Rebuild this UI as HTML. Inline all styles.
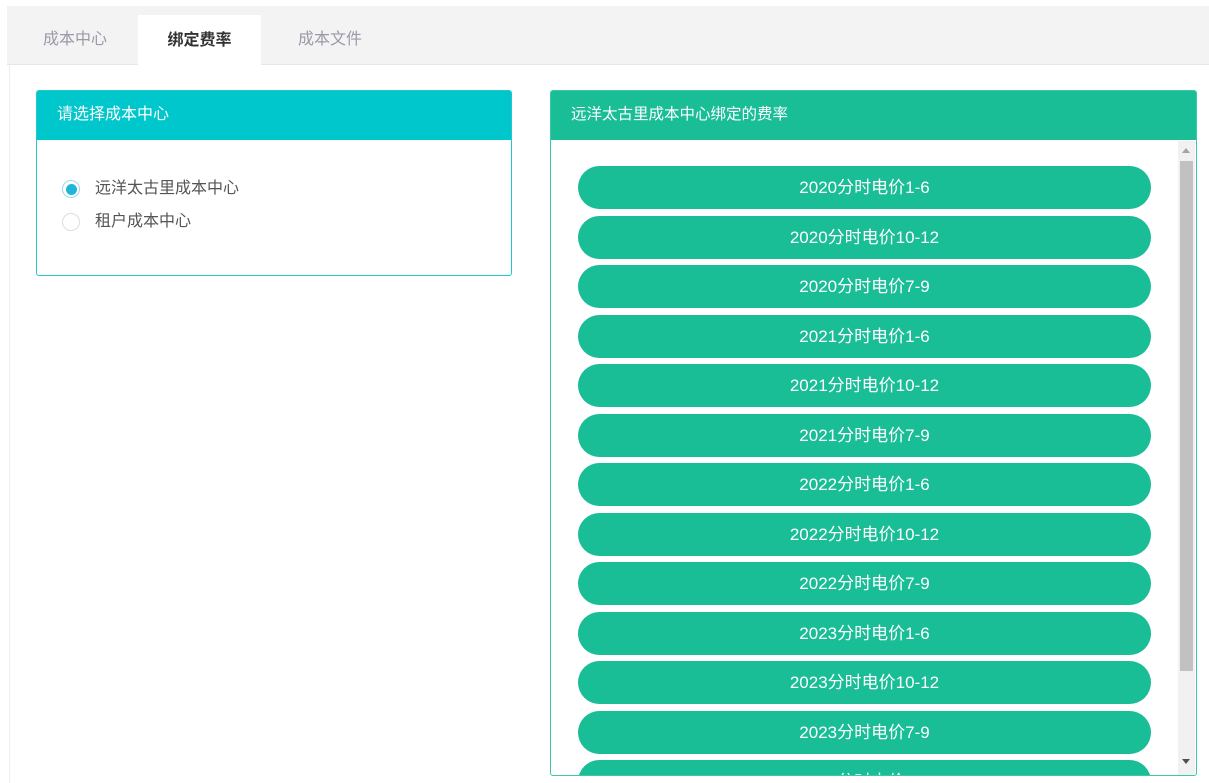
<!DOCTYPE html><html><head><meta charset="utf-8"><style>
body{margin:0;width:1209px;height:783px;background:#fff;font-family:"Liberation Sans","Noto Sans CJK SC",sans-serif;position:relative;overflow:hidden}
.tabbar{position:absolute;left:7px;top:6px;width:1202px;height:58px;background:#f3f3f3;border-bottom:1px solid #e6e6e6}
.tab{position:absolute;font-size:16px;color:#9a9aa8;line-height:20px}
.act{position:absolute;left:138px;top:15px;width:123px;height:50px;background:#fff;text-align:center;line-height:52px;font-size:16px;font-weight:bold;color:#333}
.content{position:absolute;left:9px;top:65px;width:1200px;height:718px;border-left:1px solid #eee}
.panel{position:absolute;border-radius:3px;box-sizing:border-box;overflow:hidden}
.hd{height:50px;line-height:50px;color:#fff;font-size:15.5px;padding-left:21px}
.btn{position:absolute;left:27px;width:573px;height:43px;border-radius:22px;background:#19bd96;color:#fff;font-size:17px;text-align:center;line-height:43px}
</style></head><body>
<div class="tabbar"></div>
<div class="tab" style="left:43px;top:30px">成本中心</div>
<div class="act">绑定费率</div>
<div class="tab" style="left:298px;top:30px">成本文件</div>
<div class="content"></div>
<div class="panel" style="left:36px;top:90px;width:476px;height:186px;border:1px solid #22c6cc">
<div class="hd" style="background:#00c7cc;margin:-1px -1px 0 -1px;font-size:16px">请选择成本中心</div>
<div style="position:absolute;left:25px;top:89px;width:18px;height:18px;border-radius:50%;border:1px solid #9fd8e6;box-sizing:border-box;background:#fff"><div style="position:absolute;left:2.5px;top:2.5px;width:11px;height:11px;border-radius:50%;background:#1fb5da"></div></div>
<div style="position:absolute;left:58px;top:88px;font-size:16px;line-height:20px;color:#555">远洋太古里成本中心</div>
<div style="position:absolute;left:25px;top:122px;width:18px;height:18px;border-radius:50%;border:1px solid #ddd;box-sizing:border-box"></div>
<div style="position:absolute;left:58px;top:121px;font-size:16px;line-height:20px;color:#555">租户成本中心</div>
</div>
<div class="panel" style="left:550px;top:90px;width:647px;height:686px;border:1px solid #3cc7a8">
<div class="hd" style="background:#19bd96;margin:-1px -1px 0 -1px;">远洋太古里成本中心绑定的费率</div>
<div style="position:absolute;left:0;top:50px;width:645px;height:634px;overflow:hidden">
<div class="btn" style="top:25px">2020分时电价1-6</div>
<div class="btn" style="top:74.5px">2020分时电价10-12</div>
<div class="btn" style="top:124px">2020分时电价7-9</div>
<div class="btn" style="top:173.5px">2021分时电价1-6</div>
<div class="btn" style="top:223px">2021分时电价10-12</div>
<div class="btn" style="top:272.5px">2021分时电价7-9</div>
<div class="btn" style="top:322px">2022分时电价1-6</div>
<div class="btn" style="top:371.5px">2022分时电价10-12</div>
<div class="btn" style="top:421px">2022分时电价7-9</div>
<div class="btn" style="top:470.5px">2023分时电价1-6</div>
<div class="btn" style="top:520px">2023分时电价10-12</div>
<div class="btn" style="top:569.5px">2023分时电价7-9</div>
<div class="btn" style="top:619px">2024分时电价1-6</div>
<div style="position:absolute;left:627px;top:0;width:17px;height:634px;background:#f1f1f1"></div>
<div style="position:absolute;left:629px;top:20px;width:13px;height:510px;background:#c1c1c1"></div>
<div style="position:absolute;left:631px;top:7px;width:0;height:0;border-left:4px solid transparent;border-right:4px solid transparent;border-bottom:5px solid #a3a3a3"></div>
<div style="position:absolute;left:631px;top:618px;width:0;height:0;border-left:4px solid transparent;border-right:4px solid transparent;border-top:5px solid #505050"></div>
</div>
</div>
</body></html>
